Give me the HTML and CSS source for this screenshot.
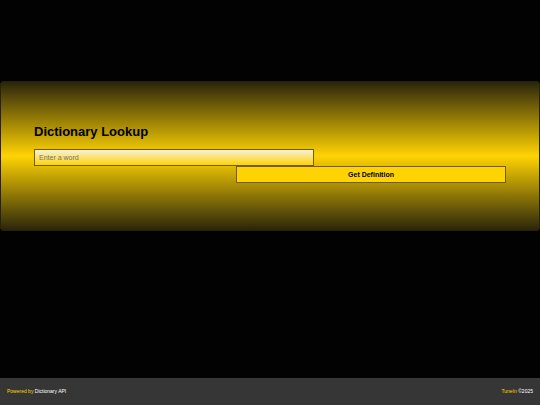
FILE: index.html
```html
<!DOCTYPE html>
<html lang="en">
<head>
<meta charset="utf-8">
<meta name="viewport" content="width=device-width, initial-scale=1">
<title>Dictionary Lookup</title>
<link rel="stylesheet" href="styles.css">
</head>
<body>
<main class="page">
  <form class="lookup">
    <h1 class="lookup-title"><label for="word">Dictionary Lookup</label></h1>
    <input class="lookup-input" id="word" type="text" placeholder="Enter a word">
    <button class="lookup-button" type="button">Get Definition</button>
  </form>
</main>
<footer class="footer">
  <p class="footer-text">Powered by <a class="footer-link" href="#">Dictionary API</a></p>
  <p class="footer-text">TuneIn <span class="footer-link">©2025</span></p>
</footer>
</body>
</html>
```

FILE: styles.css
```css
* {
  box-sizing: border-box;
}

body {
  display: flex;
  flex-direction: column;
  min-height: 100vh;
  margin: 0;
  background: #020202;
  color: #000;
  font-family: "Liberation Sans", Arial, sans-serif;
}

.page {
  flex: 1;
  padding-top: 20vh;
}

.lookup {
  display: flex;
  flex-direction: column;
  padding: 42px 33px 47px;
  border: 1px solid #262206;
  border-radius: 3px;
  background: linear-gradient(#2a250b, #ffd302 50%, #2a250b);
}

.lookup-title {
  margin: 0 0 9px;
  font-size: 13px;
  line-height: 16px;
}

.lookup-input,
.lookup-button {
  height: 17px;
  margin: 0;
  border: 1px solid #6f5d0a;
  border-radius: 0;
  font-family: inherit;
  font-size: 7px;
}

.lookup-input {
  width: 59.3%;
  padding: 0 4px;
  background: linear-gradient(#f7f1dc, #ffd302);
}

.lookup-input::placeholder {
  color: #757575;
}

.lookup-button {
  align-self: flex-end;
  width: 57.2%;
  padding: 0;
  background: #ffd302;
  color: #000;
  font-weight: bold;
}

.footer {
  display: flex;
  align-items: center;
  justify-content: space-between;
  height: 27px;
  padding: 0 7px 1px;
  background: #363636;
}

.footer-text {
  margin: 0;
  color: #ffd302;
  font-size: 5px;
  line-height: 6px;
}

.footer-link {
  color: #fff;
  text-decoration: none;
}
```
